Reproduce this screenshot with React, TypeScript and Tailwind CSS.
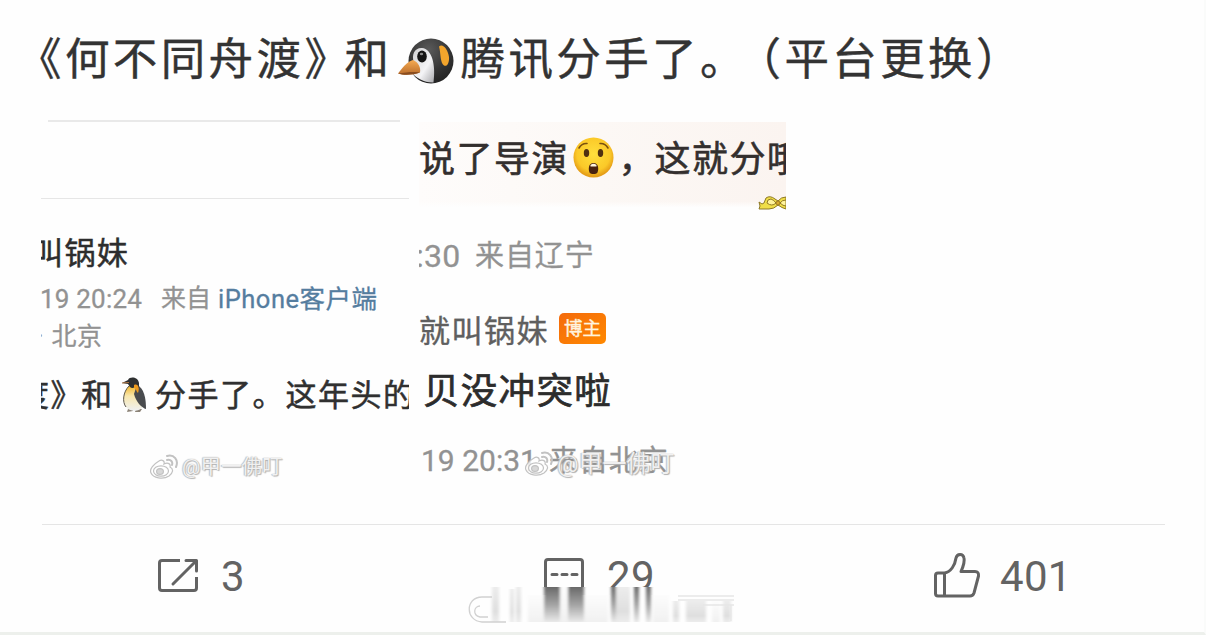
import React from "react";

const cjk = "font-['Roboto','Noto_Sans_CJK_SC',sans-serif]";

function PenguinHead() {
  return (
    <svg className="h-[48px] w-[56px] shrink-0" viewBox="0 0 56 48">
      <defs>
        <radialGradient id="ph" cx=".45" cy=".25" r=".8">
          <stop offset="0" stopColor="#5a5a5a" />
          <stop offset=".6" stopColor="#333" />
          <stop offset="1" stopColor="#202020" />
        </radialGradient>
        <linearGradient id="pf" x1="0" y1="0" x2="1" y2="1">
          <stop offset="0" stopColor="#d0d0d2" />
          <stop offset=".6" stopColor="#f4f4f6" />
          <stop offset="1" stopColor="#a8a8ac" />
        </linearGradient>
        <linearGradient id="pb" x1="0" y1="0" x2="0" y2="1">
          <stop offset="0" stopColor="#f6ab52" />
          <stop offset="1" stopColor="#b96c2b" />
        </linearGradient>
      </defs>
      <ellipse cx="33" cy="24" rx="22.500" ry="22.500" fill="url(#ph)" />
      <path d="M16 26C13 17 17 10.500 24 11C34 12 38 28 35.500 45.500C27 46 18 41 14 36Z" fill="url(#pf)" />
      <ellipse cx="24" cy="19.500" rx="4.800" ry="6" fill="#151515" />
      <ellipse cx="23.500" cy="17" rx="1.700" ry="1.200" fill="#8a8a8a" />
      <path d="M41 9.500C45 6 50 13 51 20C51.500 26 49 30 46 28.500C42 26 43 17 41 9.500Z" fill="#f3a52c" />
      <path d="M15 23C10 24 4 31 0 36.500C6 38.500 15 38 22 35.500C23 30 20 25 15 23Z" fill="url(#pb)" />
      <path d="M0 36.500C8 35.500 15 34.500 22 35.500C15 38 6 38.500 0 36.500Z" fill="#8a4d1f" />
    </svg>
  );
}

function Penguin() {
  return (
    <svg className="block h-[37px] w-[26px]" viewBox="0 0 26 37">
      <defs>
        <linearGradient id="pg" x1="0" y1="0" x2="0" y2="1">
          <stop offset="0" stopColor="#f3b72e" />
          <stop offset=".4" stopColor="#f8e7ac" />
          <stop offset="1" stopColor="#eef0f2" />
        </linearGradient>
      </defs>
      <path d="M7 33L12 32L12 35L6 36ZM15 33L21 33L19 36L14 36Z" fill="#8c8377" />
      <path d="M8 10C1 17 1 28 7 33C12 36 19 35 22 31L18 10Z" fill="url(#pg)" />
      <path d="M8 10C2 16 1 26 5 31" fill="none" stroke="#5b564b" strokeWidth="1" />
      <path d="M16 9C23 12 25 22 25 33C21 32 15 26 13 18Z" fill="#494b4e" />
      <path d="M1 7L7 4C9 0 17 1 18 7L18 12C14 9 13 14 9 11L7 8Z" fill="#2e3031" />
      <path d="M13 9C17 7 19 12 17 17C15 15 15 12 13 12Z" fill="#ed991d" />
      <path d="M1 7L8 6.500" stroke="#b27745" strokeWidth="1" />
    </svg>
  );
}

function Astonished() {
  return (
    <svg className="block h-[41px] w-[41px]" viewBox="0 0 41 41">
      <defs>
        <radialGradient id="face" cx=".5" cy=".42" r=".55">
          <stop offset="0" stopColor="#ffdf3d" />
          <stop offset=".75" stopColor="#fbc928" />
          <stop offset="1" stopColor="#e59d17" />
        </radialGradient>
      </defs>
      <circle cx="20.500" cy="20.500" r="20" fill="url(#face)" />
      <path d="M6 11Q9 6 14 6.500M27 6.500Q32 6 35 11" fill="none" stroke="#79500f" strokeWidth="1.600" strokeLinecap="round" />
      <ellipse cx="13.500" cy="16" rx="2.700" ry="4" fill="#503011" />
      <ellipse cx="27.500" cy="16" rx="2.700" ry="4" fill="#503011" />
      <path d="M20.500 26C25.500 26 26 32 24.500 35.500C23 37.500 18 37.500 16.500 35.500C15 32 15.500 26 20.500 26Z" fill="#48220f" />
      <path d="M17.500 28Q20.500 25.500 23.500 28V29.500H17.500Z" fill="#fff6e0" />
    </svg>
  );
}

function Bow() {
  return (
    <svg className="block h-[16px] w-[28px]" viewBox="0 0 28 16">
      <path
        d="M1 7L4 9L6 8L8 3Q12 0 17 4L20 6Q23 2 28 2V14Q24 13 20 10Q16 14 11 14H1L2 11Z"
        fill="#f0de48"
        stroke="#8d7826"
        strokeWidth="1"
      />
      <path d="M9 8Q9 4 13 4Q16 5 18 8Q14 12 9 8ZM22 8Q24 5 28 5V11Q25 11 22 8Z" fill="#fff39c" stroke="#927b24" strokeWidth="1" />
      <circle cx="20" cy="8" r="2" fill="#d6aa2e" stroke="#85601e" strokeWidth=".7" />
    </svg>
  );
}

function Watermark({ className }: { className: string }) {
  return (
    <div className={`absolute flex h-[28px] items-center ${className}`}>
      <svg className="mr-[3px] h-[26px] w-[30px]" viewBox="0 0 30 26" fill="#ffffffcc" stroke="#c2c2c2" strokeWidth="1.200">
        <path d="M10 7C13 5 16 7 15 10C19 8 22 10 21 13C25 15 24 19 20 22C14 26 4 24 2 19C0 15 5 10 10 7Z" />
        <ellipse cx="12" cy="17" rx="7.500" ry="5.200" />
        <ellipse cx="11" cy="17.500" rx="3.400" ry="2.900" fill="#d8d8d8" />
        <path d="M18 2C25 0 30 6 27 13M18 6C22 5 24 8 23 11" fill="none" strokeWidth="2" strokeLinecap="round" />
      </svg>
      <span className="leading-[28px] whitespace-nowrap text-white/85 [text-shadow:0_0_1px_#999,1px_1px_1px_#b5b5b5,-1px_0_1px_#ccc]">
        @甲一佛叮
      </span>
    </div>
  );
}

function Headline() {
  return (
    <h1 className="flex h-[60px] shrink-0 items-center overflow-hidden pl-[17px] text-[44.500px] leading-[60px] font-normal tracking-[3.400px] whitespace-nowrap text-[#333333] [-webkit-text-stroke:0.4px_#333333]">
      <span className="w-[327.500px] shrink-0">《何不同舟渡》</span>
      <span className="w-[53px] shrink-0">和</span>
      <span className="mt-px flex w-[63px] shrink-0">
        <PenguinHead />
      </span>
      <span className="w-[276px] shrink-0">腾讯分手了。</span>
      <span className="shrink-0">（平台更换）</span>
    </h1>
  );
}

function LeftShot() {
  return (
    <section className="relative flex h-[368px] w-[368px] shrink-0 flex-col overflow-hidden whitespace-nowrap">
      <div className="mt-[2px] ml-[7px] h-[2px] w-[352px] shrink-0 bg-[#e9e9e9]" />
      <div className="mt-[76px] h-px shrink-0 bg-[#e6e6e6]" />
      <div className="mt-[34px] -ml-[9px] h-[42px] text-[31px] leading-[42px] tracking-[1.400px] text-[#2d2d2d] [-webkit-text-stroke:0.5px_#2d2d2d]">
        叫锅妹
      </div>
      <div className="mt-[6px] flex h-[36px] text-[25px] leading-[36px] text-[#929292] [-webkit-text-stroke:0.3px_currentColor]">
        <span className="-ml-px w-[121px] shrink-0 text-[26px] tracking-[.2px]">19 20:24</span>
        <span className="w-[57px] shrink-0">来自</span>
        <span className="text-[25.500px] tracking-[.5px] text-[#557d9f]">iPhone客户端</span>
      </div>
      <div className="mt-[2px] flex h-[36px] text-[25px] leading-[36px] text-[#929292] [-webkit-text-stroke:0.3px_currentColor]">
        <span className="-ml-[4px] w-[14.500px] shrink-0">·</span>
        <span className="tracking-[.5px]">北京</span>
      </div>
      <div className="mt-[20px] flex h-[42px] items-center text-[31px] leading-[42px] tracking-[1.500px] text-[#303030] [-webkit-text-stroke:0.5px_#303030]">
        <span className="-ml-[23px] w-[63px] shrink-0">度》</span>
        <span className="w-[39.500px] shrink-0">和</span>
        <span className="-mt-[3px] w-[34.500px] shrink-0">
          <Penguin />
        </span>
        <span className="w-[130.500px] shrink-0">分手了。</span>
        <span>这年头的</span>
      </div>
      <Watermark className="top-[335px] left-[108px] text-[20.500px]" />
    </section>
  );
}

function RightShot() {
  return (
    <section className="relative flex h-[368px] w-[367px] shrink-0 flex-col overflow-hidden whitespace-nowrap">
      <div className="mt-[4px] flex h-[90px] shrink-0 flex-col bg-[linear-gradient(180deg,transparent_88%,#fefefe_95%),linear-gradient(90deg,#fefcfb,#fcf8f5_50%,#fbf4f0)]">
        <div className="mt-[13px] flex h-[50px] items-center text-[36px] leading-[50px] tracking-[1.500px] text-[#332f2e] [-webkit-text-stroke:0.6px_#332f2e]">
          <span className="w-[154px] shrink-0">说了导演</span>
          <span className="-mt-[6px] w-[45.500px] shrink-0">
            <Astonished />
          </span>
          <span className="w-[36px] shrink-0">，</span>
          <span>这就分哦</span>
        </div>
        <div className="mt-[10px] flex justify-end">
          <Bow />
        </div>
      </div>
      <div className="mt-[22px] flex h-[44px] shrink-0 text-[29px] leading-[44px] tracking-[.9px] text-[#929292] [-webkit-text-stroke:0.3px_currentColor]">
        <span className="-ml-[3px] w-[59px] shrink-0 text-[32px] tracking-[.2px]">:30</span>
        <span>来自辽宁</span>
      </div>
      <div className="mt-[31px] flex h-[46px] shrink-0 items-center text-[31px] leading-[46px] tracking-[1.500px] text-[#5f5f5f] [-webkit-text-stroke:0.4px_currentColor]">
        <span className="w-[140px] shrink-0">就叫锅妹</span>
        <span className="-mt-[7px] flex h-[31px] w-[47px] items-center justify-center rounded-[5px] bg-gradient-to-br from-[#f46a0b] to-[#ff8900] text-[18.500px] leading-[28px] tracking-normal text-[#fff4df]">
          博主
        </span>
      </div>
      <div className="mt-[12px] h-[50px] shrink-0 pl-[4px] text-[36.500px] leading-[50px] tracking-[1.300px] text-[#2c2c2c] [-webkit-text-stroke:0.7px_#2c2c2c]">
        贝没冲突啦
      </div>
      <div className="mt-[22px] flex h-[44px] shrink-0 text-[29px] leading-[44px] tracking-[.9px] text-[#929292] [-webkit-text-stroke:0.3px_currentColor]">
        <span className="ml-[2px] w-[128px] shrink-0 text-[30px] tracking-normal">19 20:31</span>
        <span>来自北京</span>
      </div>
      <Watermark className="top-[332px] left-[105px] text-[24px]" />
    </section>
  );
}

const count = "h-[52px] text-[42px] leading-[52px] tracking-[.3px] text-[#636363]";

function Smear() {
  const bars: [number, number, number, string][] = [
    [24, 7, 0, "lt"],
    [42, 4, 2, "lt"],
    [48, 5, 0, "lt"],
    [60, 16, 8, "xl"],
    [76, 16, 0, "dk"],
    [92, 8, 0, "xl"],
    [100, 16, 0, "dk"],
    [116, 24, 8, "xl"],
    [143, 5, 0, "dk"],
    [148, 14, 0, "lt"],
    [166, 5, 0, "dk"],
    [178, 5, 0, "dk"],
    [185, 16, 8, "xl"],
    [205, 6, 14, "lt"],
    [218, 20, 14, "lt"],
    [244, 8, 14, "xl"],
    [255, 8, 14, "lt"],
  ];
  return (
    <svg className="absolute top-[586px] left-[468px] h-[38px] w-[270px]" viewBox="0 0 270 38">
      <defs>
        <linearGradient id="dk" x1="0" y1="0" x2="0" y2="1">
          <stop offset="0" stopColor="#696969" />
          <stop offset=".5" stopColor="#a3a3a3" />
          <stop offset="1" stopColor="#eaeaea" />
        </linearGradient>
        <linearGradient id="lt" x1="0" y1="0" x2="0" y2="1">
          <stop offset="0" stopColor="#ececec" />
          <stop offset=".7" stopColor="#dfdfdf" />
          <stop offset="1" stopColor="#ececec" />
        </linearGradient>
        <linearGradient id="xl" x1="0" y1="0" x2="0" y2="1">
          <stop offset="0" stopColor="#fcfcfc" />
          <stop offset="1" stopColor="#f1f1f1" />
        </linearGradient>
        <filter id="soft" x="-5%" width="110%" y="0" height="100%">
          <feGaussianBlur stdDeviation="1.500 0.200" />
        </filter>
      </defs>
      <rect x="18" y="1" width="240" height="37" fill="#fefefe" />
      <g filter="url(#soft)">
        {bars.map(([x, w, y, tone]) => (
          <rect key={x} x={x} y={1 + y} width={w} height={35 - y} fill={`url(#${tone})`} />
        ))}
      </g>
      <path d="M38 36H14C-3 35-3 11 14 11H24M20 31H12C4 29 6 20 12 20" fill="none" stroke="#d1d1d1" strokeWidth="1.300" />
      <path d="M210 10H266M210 14H266M235 19H266M263 19V35" fill="none" stroke="#e6e6e6" strokeWidth="1.300" />
    </svg>
  );
}

function ActionBar() {
  return (
    <footer className="mx-[42px] flex h-[108px] w-[1123px] shrink-0 items-start border-t border-[#e5e5e5] pt-[26px]">
      <div className="flex w-[387px] shrink-0 items-center pl-[115px]">
        <svg className="-mt-[3px] mr-[22px] h-[35px] w-[42px]" viewBox="0 0 42 35" fill="none" stroke="#636363" strokeWidth="3" strokeLinecap="round" strokeLinejoin="round">
          <path d="M23 2.500H5Q2.500 2.500 2.500 5V30Q2.500 32.500 5 32.500H37Q39.500 32.500 39.500 30V19" strokeLinecap="butt" />
          <path d="M29 2.500H39.500V13M39 3L16 26" />
        </svg>
        <span className={count}>3</span>
      </div>
      <div className="flex w-[389px] shrink-0 items-center pl-[114px]">
        <svg className="-mt-[4px] mr-[22px] h-[36px] w-[42px]" viewBox="0 0 42 36" fill="none" stroke="#636363" strokeWidth="3">
          <path d="M2.500 36V5Q2.500 2.500 5 2.500H37Q39.500 2.500 39.500 5V36" />
          <path d="M9 17.500H14M19 17.500H24M29 17.500H34" strokeLinecap="round" />
        </svg>
        <span className={count}>29</span>
      </div>
      <div className="flex items-center pl-[115px]">
        <svg className="-mt-[4px] mr-[19px] h-[46px] w-[48px]" viewBox="0 0 48 46" fill="none" stroke="#636363" strokeWidth="3" strokeLinejoin="round">
          <path d="M11.500 21H5Q2.500 21 2.500 23.500V41.500Q2.500 44 5 44H37Q40 44 41 41L45.500 24Q46 19.500 42 19.500H28C30 15 32 10 31 6C30 1 24 1.500 23 6C22 13 18 20 11.500 21V44" />
        </svg>
        <span className={count}>401</span>
      </div>
    </footer>
  );
}

export default function App() {
  return (
    <main className={`relative flex h-[635px] w-[1206px] flex-col overflow-hidden border-r-2 border-b-[3px] border-r-[#fafbfa] border-b-[#edf0ec] bg-[#fefefe] pt-[30px] ${cjk}`}>
      <Headline />
      <div className="mt-[28px] ml-[41px] flex h-[406px] shrink-0 gap-[10px]">
        <LeftShot />
        <RightShot />
      </div>
      <ActionBar />
      <Smear />
    </main>
  );
}
